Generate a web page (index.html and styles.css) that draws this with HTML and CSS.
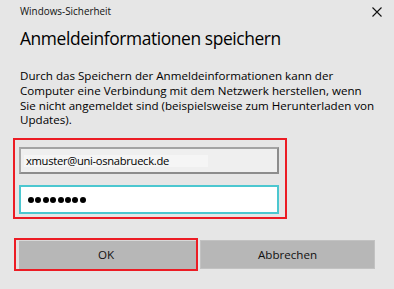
FILE: index.html
```html
<!DOCTYPE html>
<html lang="de">
<head>
<meta charset="utf-8">
<title>Windows-Sicherheit</title>
<link rel="stylesheet" href="styles.css">
</head>
<body>
<div class="dialog">
  <div class="titlebar">
    <span class="title">Windows-Sicherheit</span>
    <svg class="close" width="10" height="10" viewBox="0 0 10 10" aria-label="Schließen">
      <path d="M0.5 0.5 L9.5 9.5 M9.5 0.5 L0.5 9.5" stroke="#111" stroke-width="1.1" fill="none"/>
    </svg>
  </div>
  <h1 class="heading">Anmeldeinformationen speichern</h1>
  <p class="desc">Durch das Speichern der Anmeldeinformationen kann der<br>Computer eine Verbindung mit dem Netzwerk herstellen, wenn<br>Sie nicht angemeldet sind (beispielsweise zum Herunterladen von<br>Updates).</p>
  <div class="creds">
    <div class="field field-user"><span class="user-text">xmuster@uni-osnabrueck.de</span></div>
    <div class="field field-pass">
      <span class="dots"><i></i><i></i><i></i><i></i><i></i><i></i><i></i><i></i></span>
    </div>
  </div>
  <div class="buttons">
    <div class="btn btn-ok"><span>OK</span></div>
    <div class="btn btn-cancel"><span>Abbrechen</span></div>
  </div>
</div>
</body>
</html>
```
FILE: styles.css
```css
html, body {
  margin: 0;
  padding: 0;
  background: #e6e6e6;
}
.dialog {
  width: 394px;
  height: 289px;
  box-sizing: border-box;
  font-family: "Open Sans", "Noto Sans", sans-serif;
  color: #000;
  background: #e6e6e6;
  overflow: hidden;
}
.titlebar {
  display: flex;
  justify-content: space-between;
  align-items: center;
  height: 22px;
  padding: 0 12px 0 20px;
}
.title {
  font-size: 9.9px;
  color: #111;
}
.close {
  display: block;
  margin-top: 1px;
}
.heading {
  margin: 2px 0 0 20px;
  font-size: 17.4px;
  letter-spacing: -0.4px;
  font-weight: 400;
  line-height: 28px;
}
.desc {
  margin: 17px 0 0 20px;
  font-size: 11.6px;
  line-height: 14.8px;
}
.creds {
  margin: 10px 0 0 13px;
  width: 274px;
  box-sizing: border-box;
  border: 2px solid #ec1c24;
  padding: 7px 6px 3px 4px;
  display: flex;
  flex-direction: column;
  gap: 11px;
}
.field {
  box-sizing: border-box;
  height: 28px;
  display: flex;
  align-items: center;
}
.field-user {
  height: 27px;
  background: #efefef;
  border: 2px solid #8c8c8c;
  border-left-color: #a9a9a9;
  border-top-color: #a3a3a3;
  padding-left: 3px;
}
.user-text {
  font-size: 11.2px;
  letter-spacing: -0.3px;
  width: 182px;
  padding-left: 2px;
  background: #f5f5f5;
  line-height: 12px;
}
.field-pass {
  height: 29px;
  background: #fff;
  border: 2px solid #4cc7d0;
  padding-left: 7px;
}
.dots {
  display: flex;
  gap: 1.4px;
}
.dots i {
  display: block;
  width: 6px;
  height: 6px;
  border-radius: 50%;
  background: #000;
}
.buttons {
  display: flex;
  align-items: center;
  margin: 19px 0 0 14px;
}
.btn {
  box-sizing: border-box;
  display: flex;
  align-items: center;
  justify-content: center;
  background: #b7b7b7;
  font-size: 11.6px;
  color: #111;
}
.btn-ok {
  width: 184px;
  height: 33px;
  border: 2px solid #ec1c24;
  box-shadow: inset 3px 0 0 #e2e2e2, inset 0 1px 0 #d8d8d8;
}
.btn-cancel {
  width: 175px;
  height: 29px;
  margin-left: 2px;
  border: 1px solid #c2c2c2;
}
```
